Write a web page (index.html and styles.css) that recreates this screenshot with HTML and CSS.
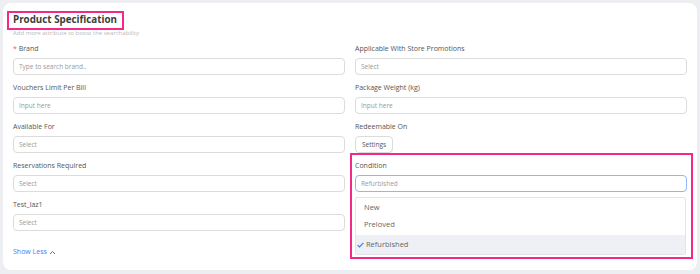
FILE: index.html
```html
<!DOCTYPE html>
<html lang="en">
<head>
    <meta charset="UTF-8">
    <title>Product Specification</title>
    <link rel="stylesheet" href="styles.css">
</head>
<body>
    <div class="card">
        <div class="card-head">
            <h1 class="title mark">Product Specification</h1>
            <p class="subtitle">Add more attribute to boost the searchability</p>
        </div>

        <div class="grid">
            <div class="field">
                <label><span class="req">*</span> Brand</label>
                <div class="input">Type to search brand..</div>
            </div>
            <div class="field">
                <label>Applicable With Store Promotions</label>
                <div class="input">Select</div>
            </div>

            <div class="field">
                <label>Vouchers Limit Per Bill</label>
                <div class="input">Input here</div>
            </div>
            <div class="field">
                <label>Package Weight (kg)</label>
                <div class="input">Input here</div>
            </div>

            <div class="field">
                <label>Available For</label>
                <div class="input">Select</div>
            </div>
            <div class="field">
                <label>Redeemable On</label>
                <button class="btn">Settings</button>
            </div>

            <div class="field">
                <label>Reservations Required</label>
                <div class="input">Select</div>
            </div>
            <div class="field focus-field">
                <div class="highlight"></div>
                <label>Condition</label>
                <div class="input active">Refurbished</div>
                <ul class="dropdown">
                    <li>New</li>
                    <li>Preloved</li>
                    <li class="selected">
                        <svg width="7" height="6" viewBox="0 0 7 6"><path d="M0.6 3.2 L2.6 5 L6.4 0.8" fill="none" stroke="#3d7fe6" stroke-width="1.2"/></svg>
                        Refurbished
                    </li>
                </ul>
            </div>

            <div class="field">
                <label>Test_laz1</label>
                <div class="input">Select</div>
            </div>
            <div class="field"></div>
        </div>

        <a class="show-less" href="#">Show Less
            <svg width="7" height="5" viewBox="0 0 7 5"><path d="M1 4 L3.5 1.5 L6 4" fill="none" stroke="#3d82f0" stroke-width="1"/></svg>
        </a>
    </div>
</body>
</html>
```

FILE: styles.css
```css
body {
    font-family: "Open Sans", "Noto Sans", Arial, sans-serif;
    margin: 0;
    padding: 3px;
    background-color: #eceef2;
    color: #555;
}
.card {
    background: #fff;
    border-radius: 8px;
    padding: 3px 10px 0 10px;
    height: 267px;
    box-sizing: border-box;
}
.card-head {
    margin-bottom: 7px;
}
.title {
    display: inline-block;
    font-size: 9.8px;
    font-weight: 700;
    color: #3c3c3c;
    margin: 0;
    line-height: 20px;
    position: relative;
}
.mark::after {
    content: "";
    position: absolute;
    left: -6px;
    right: -7px;
    top: 1px;
    bottom: 0;
    border: 2px solid #f5288a;
}
.subtitle {
    margin: -1px 0 0 0;
    font-size: 6px;
    line-height: 8px;
    color: #b9b9b9;
}
.grid {
    display: grid;
    grid-template-columns: 1fr 1fr;
    column-gap: 10px;
    row-gap: 8px;
}
.field {
    position: relative;
}
.field label {
    display: block;
    font-size: 7px;
    line-height: 10px;
    margin-bottom: 4px;
    color: #555;
}
.req {
    color: #f0506e;
}
.input {
    height: 17px;
    box-sizing: border-box;
    border: 1px solid #dcdcdc;
    border-radius: 4px;
    padding: 0 5px;
    font-size: 6.5px;
    line-height: 15px;
    color: #9a9a9a;
}
.input.active {
    border-color: #8fb6f5;
}
.btn {
    display: block;
    height: 17px;
    width: 38px;
    padding: 0;
    border: 1px solid #dcdcdc;
    border-radius: 4px;
    background: #fff;
    font-family: inherit;
    font-size: 6.5px;
    color: #555;
}
.highlight {
    position: absolute;
    left: -5px;
    right: -6px;
    top: -8px;
    height: 106px;
    border: 2px solid #f5288a;
    box-sizing: border-box;
    pointer-events: none;
}
.dropdown {
    position: absolute;
    left: 0;
    right: 1px;
    top: 36px;
    margin: 0;
    padding: 1px 0 0 0;
    list-style: none;
    background: #fff;
    border: 1px solid #e3e4e8;
    border-radius: 2px;
    height: 58px;
    box-sizing: border-box;
}
.dropdown li {
    height: 17px;
    line-height: 17px;
    padding-left: 8px;
    font-size: 7.5px;
    color: #666;
}
.dropdown li.selected {
    background: #eff0f5;
    padding-left: 1px;
    height: 19px;
    line-height: 19px;
    margin-top: 2px;
}
.dropdown svg {
    vertical-align: middle;
}
.show-less {
    display: inline-block;
    margin-top: 16px;
    font-size: 7px;
    color: #3d82f0;
    text-decoration: none;
}
.show-less svg {
    vertical-align: middle;
}
```
